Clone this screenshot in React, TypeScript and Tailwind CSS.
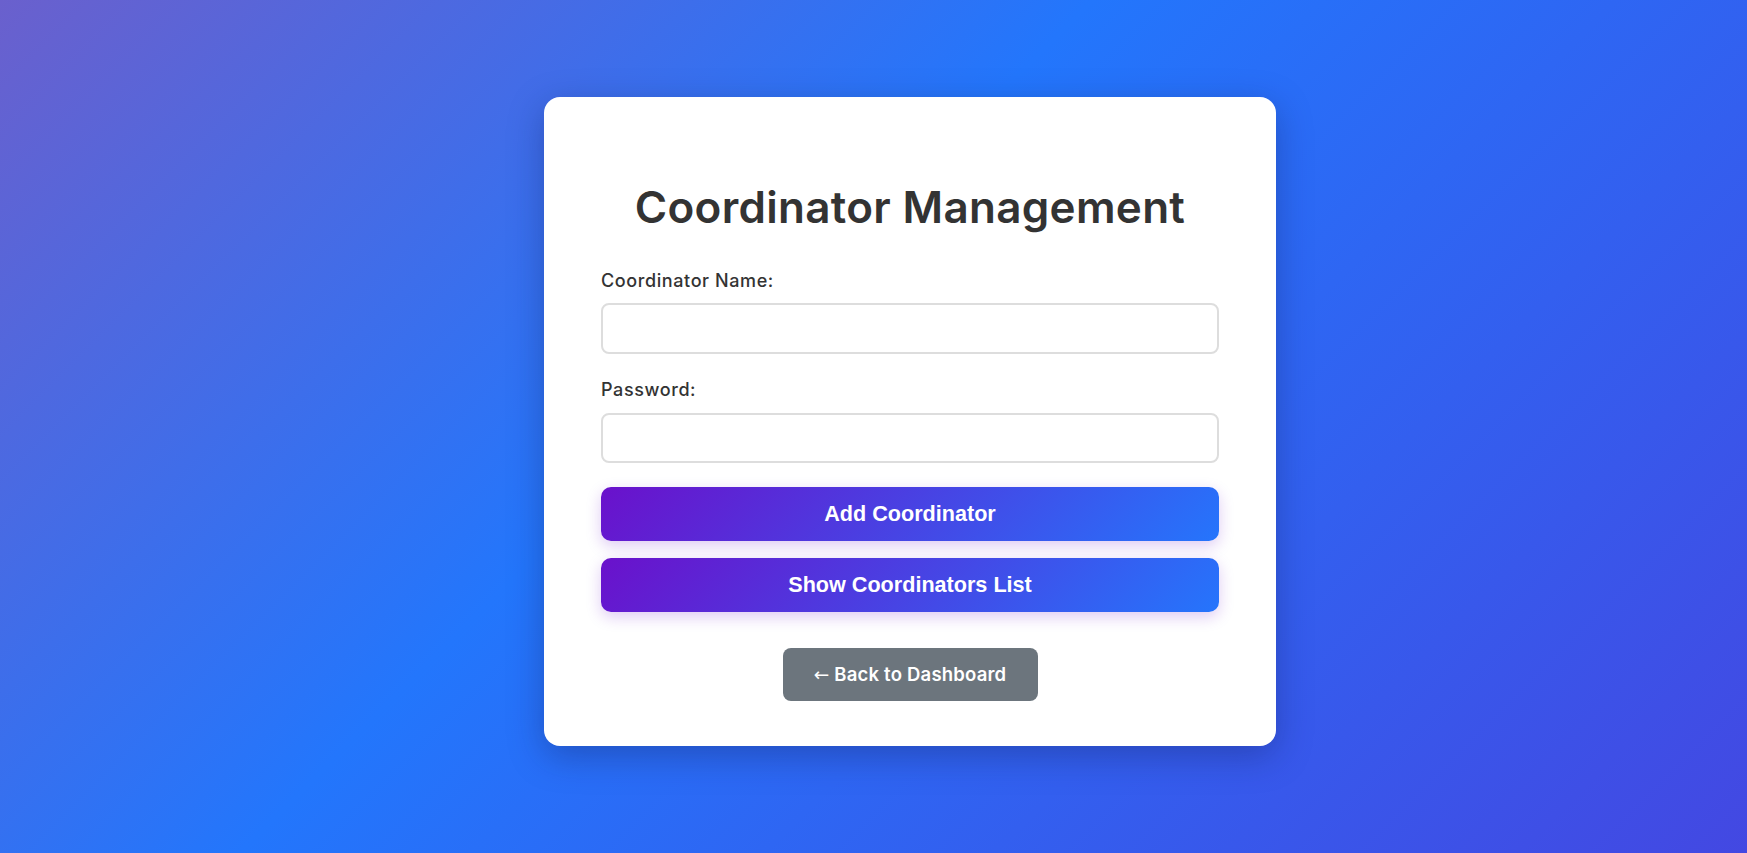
import React from "react";

export default function App() {
  return (
    <div
      className="min-h-screen w-full flex items-center justify-center pl-[73px] pb-[10px] bg-[linear-gradient(135deg,#6a60cd_0%,#2376fc_42%,#4348e2_100%)]"
      style={{ fontFamily: "Inter, 'Noto Sans', sans-serif" }}
    >
      <div className="w-[732px] bg-white rounded-[16px] shadow-[0_10px_35px_rgba(20,30,90,0.35)] px-[57px] pt-[84px] pb-[45px] flex flex-col">
        <h1 className="text-center text-[44px] leading-[52px] font-semibold text-[#333] tracking-[0.3px]">
          Coordinator Management
        </h1>
        <label className="mt-[36px] text-[18px] leading-[24px] font-medium text-[#333] tracking-[0.6px]">
          Coordinator Name:
        </label>
        <input
          type="text"
          className="mt-[10px] h-[51px] w-full rounded-[8px] border-2 border-[#ddd] px-3 outline-none"
        />
        <label className="mt-[24px] text-[18px] leading-[24px] font-medium text-[#333] tracking-[0.6px]">
          Password:
        </label>
        <input
          type="password"
          className="mt-[11px] h-[50px] w-full rounded-[8px] border-2 border-[#ddd] px-3 outline-none"
        />
        <button
          className="mt-[24px] h-[54px] w-full rounded-[10px] text-white font-bold text-[21.6px] bg-[linear-gradient(135deg,#6a11cb_0%,#2575fc_100%)] shadow-[0_5px_15px_rgba(106,17,203,0.22)]"
          style={{ fontFamily: "'Liberation Sans', Arial, sans-serif" }}
        >
          Add Coordinator
        </button>
        <button
          className="mt-[17px] h-[54px] w-full rounded-[10px] text-white font-bold text-[21.6px] bg-[linear-gradient(135deg,#6a11cb_0%,#2575fc_100%)] shadow-[0_5px_15px_rgba(106,17,203,0.22)]"
          style={{ fontFamily: "'Liberation Sans', Arial, sans-serif" }}
        >
          Show Coordinators List
        </button>
        <div className="mt-[36px] flex justify-center">
          <button className="h-[53px] w-[255px] rounded-[8px] bg-[#6c757d] text-white text-[18.5px] font-semibold flex items-center justify-center tracking-[0.2px]">
            <span
              className="font-normal mr-[5px]"
              style={{ fontFamily: "'DejaVu Sans', sans-serif" }}
            >
              ←
            </span>
            <span>Back to Dashboard</span>
          </button>
        </div>
      </div>
    </div>
  );
}
